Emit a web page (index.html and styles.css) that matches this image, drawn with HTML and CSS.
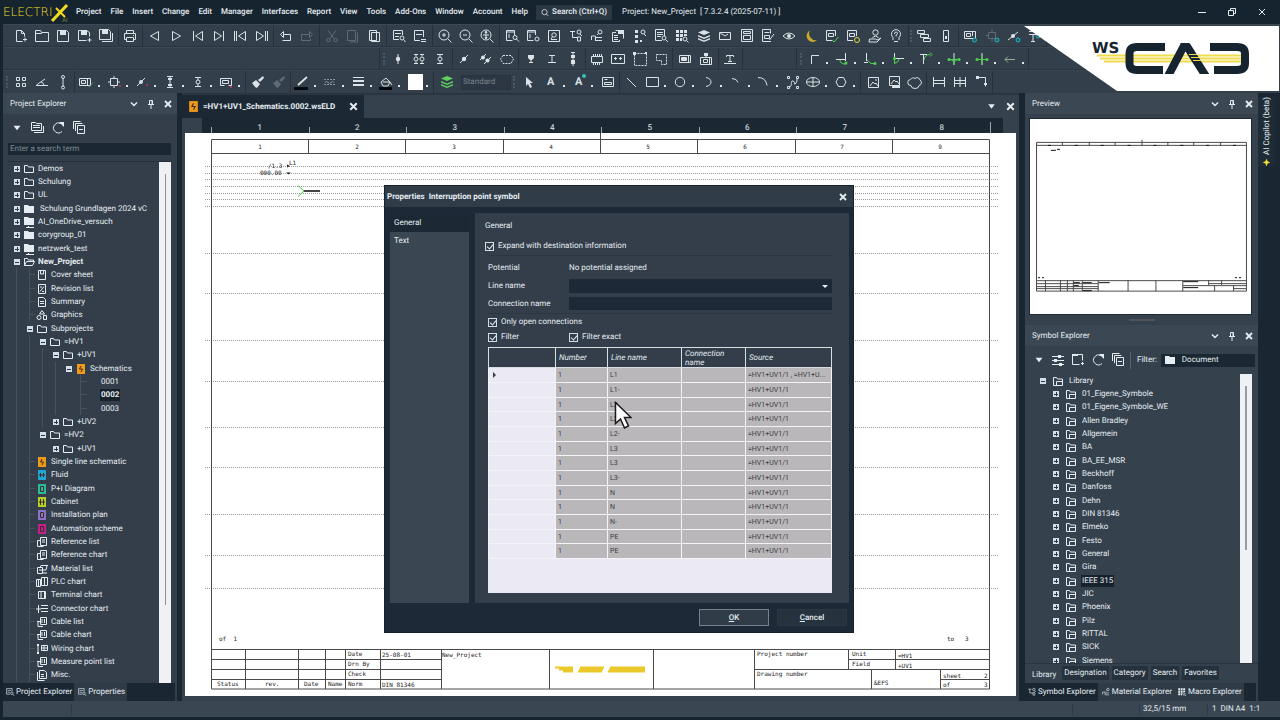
FILE: index.html
```html
<!DOCTYPE html>
<html lang="en">
<head>
<meta charset="utf-8">
<title>ELECTRIX - New_Project</title>
<link rel="stylesheet" href="styles.css">
</head>
<body>
<svg class="sprite" aria-hidden="true">
<symbol id="new" viewBox="0 0 16 16"><path d="M9.500 13.500H3.500v-11h5l3 3v3M8.500 2.500v3h3M12 9.500v4M10 11.500h4"/></symbol>
<symbol id="open" viewBox="0 0 16 16"><path d="M1.500 13.500v-11h5l1 2h7v9zM1.500 5.500h6l1-1"/></symbol>
<symbol id="save" viewBox="0 0 16 16"><path d="M2.500 2.500h9l2 2v9h-11z"/><path class="f" d="M5 2h6v5H5z"/></symbol>
<symbol id="saveas" viewBox="0 0 16 16"><path d="M9.500 12.500h-8v-10h8l3 2v4M12.500 10v4M10.500 12h4"/><path class="f" d="M4 2h6v5H4z"/></symbol>
<symbol id="saveall" viewBox="0 0 16 16"><path d="M1.500 1.500h9l2 2v8h-11zM14.500 5v8.500H4"/><path class="f" d="M4 1h6v5H4z"/></symbol>
<symbol id="print" viewBox="0 0 16 16"><path d="M4.500 5.500v-3h7v3M4.500 11.500h-2v-6h11v6h-2M4.500 9.500h7v4h-7zM11 7.500h1"/></symbol>
<symbol id="prev" viewBox="0 0 16 16"><path d="M11.500 3.500v9l-8-4.500z"/></symbol>
<symbol id="next" viewBox="0 0 16 16"><path d="M4.500 3.500v9l8-4.500z"/></symbol>
<symbol id="first" viewBox="0 0 16 16"><path d="M12.500 3.500v9l-7-4.500zM3.500 3v10"/></symbol>
<symbol id="last" viewBox="0 0 16 16"><path d="M3.500 3.500v9l7-4.500zM12.500 3v10"/></symbol>
<symbol id="ffirst" viewBox="0 0 16 16"><path d="M13.500 3.500v9l-7-4.500zM2.500 3v10M4.500 3v10"/></symbol>
<symbol id="llast" viewBox="0 0 16 16"><path d="M2.500 3.500v9l7-4.500zM11.500 3v10M13.500 3v10"/></symbol>
<symbol id="undo" viewBox="0 0 16 16"><path d="M5.500 3.500L2.500 6.500l3 3v-6M5.500 6.500h7v6h-8"/></symbol>
<symbol id="redo" viewBox="0 0 16 16"><path d="M10.500 3.500l3 3-3 3v-6M10.500 6.500h-8v6h9v-2"/></symbol>
<symbol id="cut" viewBox="0 0 16 16"><path d="M4 2.500l6 8M12 2.500l-6 8"/><circle cx="4.500" cy="12" r="1.700"/><circle cx="11.500" cy="12" r="1.700"/></symbol>
<symbol id="copy" viewBox="0 0 16 16"><path d="M2.500 2.500h8v10h-8zM12.500 4.500v9.500H5"/></symbol>
<symbol id="paste" viewBox="0 0 16 16"><path d="M3.500 2.500h7v10h-7zM5.500 4.500h8v9h-8z"/></symbol>
<symbol id="find" viewBox="0 0 16 16"><path d="M8 11.500H2.500v-9h9V7M4 5.500h6M4 8.500h4"/><circle cx="11" cy="10" r="2"/><path d="M12.500 11.500L14.500 14"/></symbol>
<symbol id="replace" viewBox="0 0 16 16"><path d="M8 12.500H2.500v-10h9V9M4 6.500h6M9 11.500h5M9 13.500h5"/></symbol>
<symbol id="zin" viewBox="0 0 16 16"><circle cx="7" cy="7" r="5"/><path d="M11 11l3.500 3.500M7 5v4M5 7h4"/></symbol>
<symbol id="zout" viewBox="0 0 16 16"><circle cx="7" cy="7" r="5"/><path d="M11 11l3.500 3.500M5 7h4"/></symbol>
<symbol id="zfit" viewBox="0 0 16 16"><circle cx="7" cy="7" r="5"/><path d="M11 11l3.500 3.500M7 4v6M4 7h6M7 3l1 1.500H6zM7 11l1-1.500H6z"/></symbol>
<symbol id="docfind" viewBox="0 0 16 16"><path d="M8.500 12.500h-6v-10h8V7M2.500 4h8M5 6v4"/><circle cx="11" cy="9.500" r="2"/><path d="M12.500 11L15 13.500"/></symbol>
<symbol id="docgear" viewBox="0 0 16 16"><path d="M8.500 12.500h-6v-10h8V7M2.500 4h8M5 6v4"/><circle cx="12" cy="11" r="2"/></symbol>
<symbol id="boxfind" viewBox="0 0 16 16"><path d="M2.500 2.500h11v11h-11z"/><circle cx="8" cy="7" r="2.200"/><path d="M6.500 8.500L5 11M5 11.500h6"/></symbol>
<symbol id="treea" viewBox="0 0 16 16"><path d="M2 3.500h5M4.500 3.500v6h5M9.500 9v4h3v-4z"/><circle cx="11" cy="4" r="2"/><path d="M12 6l2 2"/></symbol>
<symbol id="treeb" viewBox="0 0 16 16"><path d="M2.500 12v-4h4M6.500 8v5M7 9.500h6M7 12.500h6"/><circle cx="11" cy="4" r="2"/><path d="M9.500 5.500L8 7"/></symbol>
<symbol id="copies" viewBox="0 0 16 16"><path d="M6 4.500H2.500v9h7V12M5.500 2.500h8v8M4 7.500h4M4 9.500h4M4 11.500h4"/><path class="f" d="M8 2h6v4H8z"/></symbol>
<symbol id="dots" viewBox="0 0 16 16"><path class="f" d="M3 2h3v3H3zM3 7h3v3H3zM3 12h3v3H3zM8 12h2v2H8z"/><circle cx="11" cy="4" r="2"/><path d="M12 6l2 2"/></symbol>
<symbol id="doclist" viewBox="0 0 16 16"><path d="M9 12.500H2.500v-11h9V8M4 4.500h6M4 6.500h6M4 8.500h4"/><circle cx="11" cy="10" r="2"/><path d="M12.500 11.500L15 14"/></symbol>
<symbol id="gridf" viewBox="0 0 16 16"><path class="f" d="M2 2h3v3H2zM6 2h3v3H6zM10 2h3v3h-3zM2 6h3v3H2zM6 6h3v3H6zM10 6h3v2h-3zM2 10h3v3H2zM6 10h2v3H6z"/><circle cx="11" cy="11" r="2"/><path d="M12.500 12.500l2 2"/></symbol>
<symbol id="layers" viewBox="0 0 16 16"><path class="f" d="M8 2l6 2.500-6 2.500-6-2.500zM2 7l6 2.500L14 7v1.500L8 11 2 8.500zM2 10l6 2.500 6-2.500v1.500L8 14l-6-2.500z"/></symbol>
<symbol id="mail" viewBox="0 0 16 16"><path d="M2.500 4.500h11v7h-11zM5 6l3 2 3-2M4 4.500v2"/></symbol>
<symbol id="frame" viewBox="0 0 16 16"><path d="M2.500 1.500h11v12h-11zM4.500 3.500h7v2h-7zM4.500 7.500h7v4h-7z"/></symbol>
<symbol id="docedit" viewBox="0 0 16 16"><path d="M11 13.500H2.500v-12h8v4M4.500 4.500h5M4.500 7.500h5v3h-5zM9.500 12l4.500-6"/></symbol>
<symbol id="eye" viewBox="0 0 16 16"><path d="M2 8q6-6 12 0-6 6-12 0"/><circle class="f" cx="8" cy="8" r="2"/></symbol>
<symbol id="moon" viewBox="0 0 16 16"><path class="f" d="M7 2.500a6 6 0 1 0 7 9.500A6.500 6.500 0 0 1 7 2.500"/></symbol>
<symbol id="docok" viewBox="0 0 16 16"><path d="M8 12.500H2.500v-10h9V8M4.500 5.500h5v3h-5z"/><path class="gr" d="M8 12l2 2 4.500-5"/></symbol>
<symbol id="docye" viewBox="0 0 16 16"><path d="M8 12.500H2.500v-10h9V8M4.500 5.500h5v3h-5z"/><circle class="ye" cx="12" cy="12" r="2.500"/></symbol>
<symbol id="user" viewBox="0 0 16 16"><circle cx="8.500" cy="4.500" r="2.700"/><path d="M5.500 9.500q3-3 6 0M2.500 11h6l1.500 1 4-2-4 4h-8z"/></symbol>
<symbol id="help" viewBox="0 0 16 16"><path d="M5 12V9.500A4.500 4.500 0 1 1 11 9.500V12M6.500 6q0-2 1.500-2t1.500 1.500Q9 7 8 7v1.500M6 13.500h4"/></symbol>
<symbol id="wins" viewBox="0 0 16 16"><path d="M1.500 2.500h7v3h-7zM4.500 6.500h8v3h-8zM7.500 10.500h7v3h-7z"/></symbol>
<symbol id="toggle" viewBox="0 0 16 16"><path d="M5.500 2.500h5v11h-5z"/><path class="f" d="M7 8h2v3H7z"/></symbol>
<symbol id="devt" viewBox="0 0 16 16"><path d="M2.500 3.500h11v7h-11zM4.500 5.500h4v3h-4zM10.500 4v4"/><circle class="te" cx="12.500" cy="12" r="2"/></symbol>
<symbol id="dash" viewBox="0 0 16 16"><path d="M4.500 4.500h7v6h-7zM8 1.500v3M8 11v3M2 7.500h2"/><circle class="te" cx="13" cy="12" r="2"/></symbol>
<symbol id="nodet" viewBox="0 0 16 16"><path d="M3 12L13 4"/><circle class="f" cx="8" cy="8" r="2"/><circle class="te" cx="13" cy="12" r="2"/></symbol>
<symbol id="tt" viewBox="0 0 16 16"><path d="M3 3.500h8v3H3M7 6v7M5 13.500h4"/><circle class="te" cx="12" cy="8" r="2"/></symbol>
<symbol id="pin1" viewBox="0 0 16 16"><path d="M8 3v10"/><circle class="f" cx="8" cy="8" r="2.200"/></symbol>
<symbol id="pin2" viewBox="0 0 16 16"><path d="M5 3.500v2M5 10.500v2M11 3.500v2M11 10.500v2M3 3.500h4M9 3.500h4M3 12.500h4M9 12.500h4"/><circle cx="5" cy="8" r="2"/><circle cx="11" cy="8" r="2"/></symbol>
<symbol id="pin3" viewBox="0 0 16 16"><path d="M5 3.500h6M5 12.500h6M8 3v3M8 10v3"/><circle cx="8" cy="8" r="2"/></symbol>
<symbol id="node" viewBox="0 0 16 16"><path d="M4 12l8-8"/><circle class="f" cx="8" cy="8" r="2.200"/></symbol>
<symbol id="node2" viewBox="0 0 16 16"><path d="M3 9l6-6M7 13l7-7"/><circle class="f" cx="6" cy="6.500" r="2"/><circle class="f" cx="10.500" cy="9.500" r="2"/></symbol>
<symbol id="hexd" viewBox="0 0 16 16"><path stroke-dasharray="2 1" d="M4 4.500h8L14.500 8 12 12.500H4L1.500 8z"/></symbol>
<symbol id="tf" viewBox="0 0 16 16"><path d="M8 7v4M6 11.500h4"/><path class="f" d="M5 4h6v3L9 9H7L5 7z"/></symbol>
<symbol id="tinv" viewBox="0 0 16 16"><path d="M5 4.500h6M8 5v6M4 11.500h8"/></symbol>
<symbol id="pinsq" viewBox="0 0 16 16"><path d="M8 1v14M6 1.500h4"/><path class="f" d="M6 4h4v3H6zM6 9h4v4H6z"/></symbol>
<symbol id="chip" viewBox="0 0 16 16"><path d="M2.500 5.500h11v6h-11zM4.500 3v2M6.500 3v2M8.500 3v2M10.500 3v2M12.500 3v2M4.500 12v2M6.500 12v2M8.500 12v2M10.500 12v2"/></symbol>
<symbol id="pp" viewBox="0 0 16 16"><path d="M1.500 3.500h13v9h-13zM4 7.500h3M5.500 6v3M9 7.500h3M10.500 6v3"/></symbol>
<symbol id="sel" viewBox="0 0 16 16"><path stroke-dasharray="2 1" d="M2.500 2.500h12v12h-12z"/><path class="f" d="M1 1h3v3H1zM13 1h2v2h-2z"/></symbol>
<symbol id="selm" viewBox="0 0 16 16"><path stroke-dasharray="2 1" d="M3.500 3.500h10v10h-5v-4h-5z"/></symbol>
<symbol id="dev" viewBox="0 0 16 16"><path d="M2.500 4.500h11v7h-11zM4.500 6.500h5v3h-5zM11.500 5v6"/><path class="f" d="M5 7h4v2H5z"/></symbol>
<symbol id="devp" viewBox="0 0 16 16"><path d="M2.500 6.500h11v7h-11zM5.500 8.500h4v3h-4zM8 3v3M11.500 7v6"/><path class="f" d="M6 2h4v3H6z"/></symbol>
<symbol id="txt" viewBox="0 0 16 16"><path d="M4.500 6v-1.500h7V6M8 5v6M6 10.500h4M2 12.500h12"/></symbol>
<symbol id="w1" viewBox="0 0 16 16"><path d="M5.500 13V4.500H13"/></symbol>
<symbol id="w2" viewBox="0 0 16 16"><path d="M2 8.500h9M11.500 2v8"/><path class="gr" d="M6 9q0 4 5 4h1"/><circle class="gf" cx="12" cy="12" r="1.500"/></symbol>
<symbol id="w3" viewBox="0 0 16 16"><path d="M4.500 2v8M2 11.500h4"/><path class="gr" d="M5 9l4 3.500h3"/><circle class="gf" cx="13" cy="12.500" r="1.500"/></symbol>
<symbol id="w4" viewBox="0 0 16 16"><path d="M4.500 2v4M5 7.500h9"/><path class="gr" d="M4.500 6v7M5 12q3 0 4-4"/><circle class="gf" cx="4.500" cy="7.500" r="1.500"/></symbol>
<symbol id="w5" viewBox="0 0 16 16"><path d="M2 3.500h7M5.500 4v9"/><path class="gr" d="M6 9q1-5.500 6-5.500M12 1.500l2 2-2 2"/></symbol>
<symbol id="w6" viewBox="0 0 16 16"><path d="M8 2v12"/><path class="gr" d="M2 8.500h12M4 8.500q4 0 4 4 0-4 4-4"/><circle class="gf" cx="3" cy="8.500" r="1.500"/><circle class="gf" cx="13" cy="8.500" r="1.500"/></symbol>
<symbol id="w7" viewBox="0 0 16 16"><path d="M8 2v12"/><path class="gr" d="M2 8.500h12M8 4v9"/><circle class="gf" cx="3" cy="8.500" r="1.500"/><circle class="gf" cx="13" cy="8.500" r="1.500"/></symbol>
<symbol id="w8" viewBox="0 0 16 16"><path d="M3 8.500h10M6 5.500l-3 3 3 3"/></symbol>
<symbol id="four" viewBox="0 0 16 16"><path d="M3.500 3.500h3v3h-3zM9.500 3.500h3v3h-3zM3.500 9.500h3v3h-3zM9.500 9.500h3v3h-3z"/></symbol>
<symbol id="angle" viewBox="0 0 16 16"><path d="M2 11.500h12M2.500 11L11 5M7 8q3 1 3 3.500"/></symbol>
<symbol id="dim" viewBox="0 0 16 16"><path d="M8 4v9"/><circle cx="8" cy="3" r="1.500"/><circle cx="8" cy="13.500" r="1.500"/></symbol>
<symbol id="devr" viewBox="0 0 16 16"><path d="M1.500 4.500h11v7h-11zM3.500 6.500h4v3h-4zM9.500 5v6"/><path class="gd" d="M10 12l2 1 3-5"/></symbol>
<symbol id="comp" viewBox="0 0 16 16"><path d="M4.500 4.500h7v7h-7zM8 2v2M8 12v2M2 8h2M12 8h2"/><path class="rf" d="M13 11h2v2h-2z"/></symbol>
<symbol id="noder" viewBox="0 0 16 16"><path d="M3 12l8-8"/><circle class="f" cx="7" cy="8" r="2"/><path class="rf" d="M12 10h2v2h-2z"/></symbol>
<symbol id="pinr" viewBox="0 0 16 16"><path d="M5 2.500h6M8 3v10M5 13.500h6"/><path class="f" d="M6 4h4v2H6zM6 10h4v2H6z"/></symbol>
<symbol id="modr" viewBox="0 0 16 16"><path d="M2.500 4.500h11v7h-3M2.500 4.500v7h4M4.500 6.500h6v3h-6z"/><path class="rf" d="M12 12h2v2h-2z"/></symbol>
<symbol id="brush" viewBox="0 0 16 16"><path class="f" d="M2 9l4-3 4 4-3 4-2-1zM8 6l5-4 1 2-4 4z"/></symbol>
<symbol id="pen" viewBox="0 0 16 16"><path stroke-width="1.800" d="M4 11l9-8"/><path class="k" d="M0 13h14v3H0z"/></symbol>
<symbol id="hatch" viewBox="0 0 16 16"><path stroke-dasharray="2 1" d="M2 5.500h12M2 10.500h12"/><path d="M3 8.500q1.500-2 3 0t3 0 3 0"/></symbol>
<symbol id="lines" viewBox="0 0 16 16"><path d="M3 3.500h11"/><path stroke-width="2" d="M3 7h11M3 11h11"/></symbol>
<symbol id="bucket" viewBox="0 0 16 16"><path d="M3 8l5-4 4 4-2 4H5zM5 8h7l2 3"/><path class="k" d="M1 13h13v3H1z"/></symbol>
<symbol id="arrow" viewBox="0 0 16 16"><path class="f" d="M5 3l7 6H9l2 4-2 1-2-4-2 2z"/></symbol>
<symbol id="imgbox" viewBox="0 0 16 16"><path d="M2.500 3.500h11v9h-11zM4.500 5.500h3M4.500 8.500h7v2h-7z"/></symbol>
<symbol id="line" viewBox="0 0 16 16"><path d="M3 4l9 9"/></symbol>
<symbol id="rect" viewBox="0 0 16 16"><path d="M2.500 3.500h12v9h-12z"/></symbol>
<symbol id="circ" viewBox="0 0 16 16"><circle cx="8" cy="8" r="4.700"/></symbol>
<symbol id="arc" viewBox="0 0 16 16"><path d="M6 3.500q5 1 5 4.500t-5 4.500"/></symbol>
<symbol id="arc2" viewBox="0 0 16 16"><path d="M4 4.500q5 0 6 4"/></symbol>
<symbol id="arc3" viewBox="0 0 16 16"><path d="M2 3.500q8 0 9 8"/></symbol>
<symbol id="spline" viewBox="0 0 16 16"><path d="M2.500 2.500h2v2h-2zM11.500 2.500h2v2h-2zM2.500 12.500h2v2h-2zM11.500 12.500h2v2h-2zM4 13C8 13 5 6 8 7s0 7 4 0V5"/></symbol>
<symbol id="ell" viewBox="0 0 16 16"><ellipse cx="8" cy="8" rx="6.500" ry="4.500"/><path d="M1.500 8h13M8 3.500v9"/></symbol>
<symbol id="hex" viewBox="0 0 16 16"><path d="M5.500 3.500h5L13 8l-2.500 4.500h-5L3 8z"/></symbol>
<symbol id="img" viewBox="0 0 16 16"><path d="M3.500 3.500h10v10h-10zM5 12l3-4 2 2 1-1 2 3M10 6h2"/></symbol>
<symbol id="img2" viewBox="0 0 16 16"><path d="M3.500 2.500h10v9h-10zM5 10l3-4 2 2 1-1 2 3"/><path class="f" d="M6 11h8v3H6z"/></symbol>
<symbol id="cloud" viewBox="0 0 16 16"><path d="M4 11.500a3 3 0 0 1-.5-6A3 3 0 0 1 8 4.500a3 3 0 0 1 5 1.500 3 3 0 0 1-1 5.500A4 3 0 0 1 4 11.500z"/></symbol>
<symbol id="hdim" viewBox="0 0 16 16"><path d="M2.500 3v10M13.500 3v10M3 6.500h10M3 9.500h10"/></symbol>
<symbol id="hdim2" viewBox="0 0 16 16"><path d="M2.500 3v10M8 3v10M13.500 3v10M3 6.500h10M3 9.500h10"/></symbol>
<symbol id="ldim" viewBox="0 0 16 16"><path d="M3 3.500h9.500v9"/><path class="f" d="M3 2h3v3H3zM11 9h3v2h-3z"/></symbol>
<symbol id="fold" viewBox="0 0 12 12"><path d="M1.500 9.500v-7h3l1 1.500h5v5.500z"/></symbol>
<symbol id="foldf" viewBox="0 0 12 12"><path class="f" d="M1 10V2h4l1 1h5v7z"/></symbol>
<symbol id="foldn" viewBox="0 0 12 12"><path class="f" d="M1 9V1h4l1 1h5v7zM3 11h2v-1h1v1h5v1H3z"/></symbol>
<symbol id="foldo" viewBox="0 0 12 12"><path d="M1.500 9.500v-7h3l1 1.500h5v2M1.500 9.500l2-4h8l-2 4z"/></symbol>
<symbol id="foldl" viewBox="0 0 12 12"><path d="M1.500 10.500v-8h3l1 1.500h5v6.500zM4.500 10V6.500h6"/></symbol>
<symbol id="cover" viewBox="0 0 12 12"><path d="M2.500 1.500h7v9h-7zM4.500 2v3h3V2"/></symbol>
<symbol id="doc" viewBox="0 0 12 12"><path d="M2.500 1.500h5l2 2v7h-7zM4 5.500h4M4 7.500h4"/></symbol>
<symbol id="rev" viewBox="0 0 12 12"><path d="M2.500 1.500h7v9h-7zM4 8.500l4-5M4 4h2M6 8.500h2"/></symbol>
<symbol id="graph" viewBox="0 0 12 12"><path d="M6 1.500L8.500 5h-5z"/><circle cx="3" cy="8.500" r="2"/><path d="M7.500 6.500h3v4h-3z"/></symbol>
<symbol id="ref" viewBox="0 0 12 12"><path d="M4.500 1.500h6v8h-6zM4 4.500H1.500v6h6M6 4h3M6 6h3"/></symbol>
<symbol id="cart" viewBox="0 0 12 12"><path d="M1.500 4.500h5v6h-5zM4 4.500l1-2h7M6 7h4l1-4M7 10h4M3 7h3"/></symbol>
<symbol id="plc" viewBox="0 0 12 12"><path d="M.5 3.500h4v7h-4zM5.500 1.500h6v8h-6zM2.500 4v6M8.500 2v7"/></symbol>
<symbol id="term" viewBox="0 0 12 12"><path d="M2.500 2.500h7v7h-7zM5 2v8"/><path class="f" d="M8 3h2v6H8z"/></symbol>
<symbol id="conn" viewBox="0 0 12 12"><path d="M0 6h5M2.500 2v8M5 2.500h7M5 5.500h7M5 8.500h7"/></symbol>
<symbol id="cable" viewBox="0 0 12 12"><path d="M4.500 1.500h6v7h-6zM6 3v4M8.500 3v4M1 5.500h3M2 6v4.500h5"/></symbol>
<symbol id="wire" viewBox="0 0 12 12"><path d="M2 2v8M5.500 2.500h6v5h-6zM8 3v4M6 5h5"/><path class="f" d="M1 1h2v2H1zM1 9h2v2H1z"/></symbol>
<symbol id="misc" viewBox="0 0 12 12"><path d="M3.500 1.500h5l2 2v6h-7zM1.500 3v8.500h7M5 5.500h3M5 7.500h3"/></symbol>
<symbol id="sld" viewBox="0 0 12 12"><path class="f" d="M2 1h8v10H2z"/><path class="d" d="M6 3L4.500 6h3L6 9"/></symbol>
<symbol id="fluid" viewBox="0 0 12 12"><path class="f" d="M2 1h8v10H2z"/><path class="d" d="M3 6h6M4.500 4v4M7.500 4v4"/></symbol>
<symbol id="boxed" viewBox="0 0 12 12"><path class="f" d="M2 1h8v10H2z"/><path class="d" d="M4.500 3.500h3v5h-3z"/></symbol>
<symbol id="cab" viewBox="0 0 12 12"><path class="f" d="M2 1h8v10H2z"/><path class="d" d="M4.500 3v6M7.500 3v6M3 6h6"/></symbol>
<symbol id="chev" viewBox="0 0 12 12"><path stroke-width="1.500" d="M3 4.500l3 3 3-3"/></symbol>
<symbol id="pin" viewBox="0 0 12 12"><path d="M4.500 6.500v-4h3v4M3 6.500h6M6 7v4M7 3v3"/></symbol>
<symbol id="x" viewBox="0 0 12 12"><path stroke-width="1.800" d="M3 3l6 6M9 3l-6 6"/></symbol>
<symbol id="tri" viewBox="0 0 12 12"><path class="f" d="M3 4h6L6 8z"/></symbol>
<symbol id="refresh" viewBox="0 0 16 16"><path d="M12 11.500a5 5 0 1 1-1-8"/><path class="f" d="M9 2h5v5z"/></symbol>
<symbol id="collapse" viewBox="0 0 16 16"><path d="M6.500 5.500h7v8h-7zM4.500 11V3.500h7M2.500 9V1.500h7M8 9.500h4"/></symbol>
<symbol id="foldstack" viewBox="0 0 16 16"><path d="M2.500 2.500h4l1 1h5v7h-10zM14.500 6v6.500H5M4 5.500h7M4 7.500h7"/></symbol>
<symbol id="foldadd" viewBox="0 0 16 16"><path d="M2.500 12.500v-10h10v6M2.500 12.500h7M11 11.500h3M12.500 10v3"/><path class="f" d="M2 2h6v2H2z"/></symbol>
<symbol id="sliders" viewBox="0 0 16 16"><path d="M2 4.500h12M2 8.500h12M2 12.500h12"/><path class="f" d="M8 3h3v3H8zM4 7h3v3H4zM9 11h3v3H9z"/></symbol>
</svg>

<header class="title">
<svg class="brand" viewBox="0 0 66 22" role="img" aria-label="Electrix AI"><text x="0" y="15" class="brandt">ELECTRI</text><path stroke-width="3" d="M64 4L49 20"/><path stroke-width="2" d="M53 7L62 16"/><text x="59" y="21" class="brands">AI</text></svg>
<nav class="menu"><a href="#">Project</a><a href="#">File</a><a href="#">Insert</a><a href="#">Change</a><a href="#">Edit</a><a href="#">Manager</a><a href="#">Interfaces</a><a href="#">Report</a><a href="#">View</a><a href="#">Tools</a><a href="#">Add-Ons</a><a href="#">Window</a><a href="#">Account</a><a href="#">Help</a></nav>
<button class="search"><svg viewBox="0 0 12 12"><circle cx="6" cy="5.500" r="3.500"/><path d="M8.500 8L11 10.500"/></svg>Search (Ctrl+Q)</button>
<span class="ptitle">Project: New_Project &nbsp;[ 7.3.2.4 (2025-07-11) ]</span>
<div class="winbtns"><button aria-label="Minimize"><svg viewBox="0 0 12 12"><path d="M2 6.500h8"/></svg></button><button aria-label="Restore"><svg viewBox="0 0 12 12"><path d="M2.500 4.500h5v5h-5zM4.500 4V2.500h5v5H8"/></svg></button><button aria-label="Close"><svg viewBox="0 0 12 12"><path d="M3 3l6 6M9 3l-6 6"/></svg></button></div>
</header>

<section class="bars">
<div class="bar bar1">
<div class="grp n5"><button aria-label="New"><svg><use href="#new"/></svg></button><button aria-label="Open"><svg><use href="#open"/></svg></button><button aria-label="Save"><svg><use href="#save"/></svg></button><button aria-label="Save as"><svg><use href="#saveas"/></svg></button><button aria-label="Save all"><svg><use href="#saveall"/></svg></button></div>
<div class="grp n1"><button aria-label="Print"><svg><use href="#print"/></svg></button></div>
<div class="grp n6"><button aria-label="Previous"><svg><use href="#prev"/></svg></button><button aria-label="Next"><svg><use href="#next"/></svg></button><button aria-label="First"><svg><use href="#first"/></svg></button><button aria-label="Last"><svg><use href="#last"/></svg></button><button aria-label="First page"><svg><use href="#ffirst"/></svg></button><button aria-label="Last page"><svg><use href="#llast"/></svg></button></div>
<div class="grp n2"><button aria-label="Undo"><svg><use href="#undo"/></svg></button><button class="off" aria-label="Redo"><svg><use href="#redo"/></svg></button></div>
<div class="grp n3"><button class="off" aria-label="Cut"><svg><use href="#cut"/></svg></button><button class="off" aria-label="Copy"><svg><use href="#copy"/></svg></button><button aria-label="Paste"><svg><use href="#paste"/></svg></button></div>
<div class="grp n2"><button aria-label="Find"><svg><use href="#find"/></svg></button><button aria-label="Replace"><svg><use href="#replace"/></svg></button></div>
<div class="grp n3"><button aria-label="Zoom in"><svg><use href="#zin"/></svg></button><button aria-label="Zoom out"><svg><use href="#zout"/></svg></button><button aria-label="Zoom fit"><svg><use href="#zfit"/></svg></button></div>
<div class="grp n19"><button aria-label="Page search"><svg><use href="#docfind"/></svg></button><button aria-label="Page settings"><svg><use href="#docgear"/></svg></button><button aria-label="Search box"><svg><use href="#boxfind"/></svg></button><button aria-label="Tree"><svg><use href="#treea"/></svg></button><button aria-label="Structure"><svg><use href="#treeb"/></svg></button><button aria-label="Copies"><svg><use href="#copies"/></svg></button><button aria-label="List"><svg><use href="#dots"/></svg></button><button aria-label="Find in list"><svg><use href="#doclist"/></svg></button><button aria-label="Grid"><svg><use href="#gridf"/></svg></button><button aria-label="Layers"><svg><use href="#layers"/></svg></button><button aria-label="Mail"><svg><use href="#mail"/></svg></button><button aria-label="Form"><svg><use href="#frame"/></svg></button><button aria-label="Edit form"><svg><use href="#docedit"/></svg></button><button aria-label="View"><svg><use href="#eye"/></svg></button><button class="moon" aria-label="Dark mode"><svg><use href="#moon"/></svg></button><button aria-label="Check"><svg><use href="#docok"/></svg></button><button aria-label="Options"><svg><use href="#docye"/></svg></button><button aria-label="Support"><svg><use href="#user"/></svg></button><button aria-label="Help"><svg><use href="#help"/></svg></button></div>
<div class="grip"></div>
<div class="grp n2"><button aria-label="Windows"><svg><use href="#wins"/></svg></button><button aria-label="Toggle"><svg><use href="#toggle"/></svg></button></div>
<div class="grp n4"><button aria-label="Add device"><svg><use href="#devt"/></svg></button><button class="off" aria-label="Add box"><svg><use href="#dash"/></svg></button><button aria-label="Add node"><svg><use href="#nodet"/></svg></button><button aria-label="Add terminal"><svg><use href="#tt"/></svg></button></div>
</div>

<div class="bar bar2">
<div class="sub suba"><div class="grip"></div>
<div class="grp n3"><button aria-label="Pin"><svg><use href="#pin1"/></svg></button><button aria-label="Double pin"><svg><use href="#pin2"/></svg></button><button aria-label="Pin pair"><svg><use href="#pin3"/></svg></button></div>
<div class="grp n3"><button aria-label="Node"><svg><use href="#node"/></svg></button><button aria-label="Nodes"><svg><use href="#node2"/></svg></button><button aria-label="Shield"><svg><use href="#hexd"/></svg></button></div>
<div class="grp n3"><button aria-label="Terminal"><svg><use href="#tf"/></svg></button><button aria-label="Terminal base"><svg><use href="#tinv"/></svg></button><button aria-label="Connector"><svg><use href="#pinsq"/></svg></button></div>
<div class="grp n4"><button aria-label="PLC"><svg><use href="#chip"/></svg></button><button aria-label="Module"><svg><use href="#pp"/></svg></button><button aria-label="Area"><svg><use href="#sel"/></svg></button><button aria-label="Polygon area"><svg><use href="#selm"/></svg></button></div>
<div class="grp n2"><button aria-label="Device"><svg><use href="#dev"/></svg></button><button aria-label="Device pin"><svg><use href="#devp"/></svg></button></div>
<div class="grp n1"><button aria-label="Text"><svg><use href="#txt"/></svg></button></div></div>
<div class="sub subb"><div class="grip"></div><button class="dd" aria-label="Wire"><svg><use href="#w1"/></svg></button><button class="dd" aria-label="Wire T"><svg><use href="#w2"/></svg></button><button class="dd" aria-label="Wire left"><svg><use href="#w3"/></svg></button><button class="dd" aria-label="Wire right"><svg><use href="#w4"/></svg></button><button class="dd" aria-label="Wire up"><svg><use href="#w5"/></svg></button><button class="dd" aria-label="Wire cross"><svg><use href="#w6"/></svg></button><button class="dd" aria-label="Wire joint"><svg><use href="#w7"/></svg></button><button class="dd dimgreen" aria-label="Wire arrow"><svg><use href="#w8"/></svg></button></div>
</div>

<div class="bar bar3">
<div class="grip"></div>
<div class="grp"><button aria-label="Grid"><svg><use href="#four"/></svg></button><button aria-label="Angle"><svg><use href="#angle"/></svg></button><button aria-label="Distance"><svg><use href="#dim"/></svg></button></div>
<div class="grp"><button class="dd" aria-label="Device style"><svg><use href="#devr"/></svg></button><button class="dd" aria-label="Component style"><svg><use href="#comp"/></svg></button><button class="dd" aria-label="Node style"><svg><use href="#noder"/></svg></button><button class="dd" aria-label="Pin style"><svg><use href="#pinr"/></svg></button><button class="dd" aria-label="Terminal style"><svg><use href="#pin3"/></svg></button><button class="dd" aria-label="Module style"><svg><use href="#modr"/></svg></button></div>
<div class="grp"><button aria-label="Format brush"><svg><use href="#brush"/></svg></button><button class="off" aria-label="Apply format"><svg><use href="#brush"/></svg></button></div>
<div class="grp"><button class="dd" aria-label="Pen colour"><svg><use href="#pen"/></svg></button><button class="dd off2" aria-label="Line type"><svg><use href="#hatch"/></svg></button><button class="dd" aria-label="Line width"><svg><use href="#lines"/></svg></button><button class="dd" aria-label="Fill"><svg><use href="#bucket"/></svg></button><button class="dd" aria-label="Fill colour"><span class="swatch"></span></button></div>
<button class="nar green" aria-label="Layer"><svg><use href="#layers"/></svg></button>
<select class="std" aria-label="Layer name" disabled><option>Standard</option></select>
<div class="grip"></div>
<div class="grp"><button class="nar" aria-label="Pointer"><svg><use href="#arrow"/></svg></button><button class="dd big" aria-label="Text">A</button><button class="dd big" aria-label="Smart text">A<span class="teal"></span></button><button aria-label="Text frame"><svg><use href="#imgbox"/></svg></button></div>
<div class="grp"><button aria-label="Line"><svg><use href="#line"/></svg></button><button class="dd" aria-label="Rectangle"><svg><use href="#rect"/></svg></button><button class="dd" aria-label="Circle"><svg><use href="#circ"/></svg></button><button class="dd" aria-label="Arc"><svg><use href="#arc"/></svg></button><button class="dd" aria-label="Arc 2"><svg><use href="#arc2"/></svg></button><button class="dd" aria-label="Arc 3"><svg><use href="#arc3"/></svg></button><button aria-label="Spline"><svg><use href="#spline"/></svg></button><button class="dd" aria-label="Ellipse"><svg><use href="#ell"/></svg></button><button class="dd" aria-label="Polygon"><svg><use href="#hex"/></svg></button></div>
<div class="grp"><button aria-label="Image"><svg><use href="#img"/></svg></button><button aria-label="Image link"><svg><use href="#img2"/></svg></button><button aria-label="Cloud"><svg><use href="#cloud"/></svg></button></div>
<div class="grp"><button aria-label="Dimension"><svg><use href="#hdim"/></svg></button><button aria-label="Chain dimension"><svg><use href="#hdim2"/></svg></button><button aria-label="Leader"><svg><use href="#ldim"/></svg></button></div>
</div>
</section>

<main class="work">
<aside class="left">
<div class="phead"><span>Project Explorer</span><button aria-label="Menu"><svg><use href="#chev"/></svg></button><button aria-label="Pin"><svg><use href="#pin"/></svg></button><button aria-label="Close"><svg><use href="#x"/></svg></button></div>
<div class="ptools"><button aria-label="Options"><svg><use href="#tri"/></svg></button><button aria-label="Folders"><svg><use href="#foldstack"/></svg></button><button aria-label="Refresh"><svg><use href="#refresh"/></svg></button><button aria-label="Collapse"><svg><use href="#collapse"/></svg></button></div>
<input class="term" type="text" placeholder="Enter a search term" aria-label="Search term">
<div class="treebox">
<ul class="tree">
<li><button class="ex"></button><svg><use href="#fold"/></svg><span>Demos</span></li>
<li><button class="ex"></button><svg><use href="#fold"/></svg><span>Schulung</span></li>
<li><button class="ex"></button><svg><use href="#fold"/></svg><span>UL</span></li>
<li><button class="ex"></button><svg><use href="#foldf"/></svg><span>&nbsp;Schulung Grundlagen 2024 vC</span></li>
<li><button class="ex"></button><svg><use href="#foldn"/></svg><span>AI_OneDrive_versuch</span></li>
<li><button class="ex"></button><svg><use href="#foldf"/></svg><span>corygroup_01</span></li>
<li><button class="ex"></button><svg><use href="#foldn"/></svg><span>netzwerk_test</span></li>
<li><button class="ex m"></button><svg><use href="#foldo"/></svg><b>New_Project</b></li>
<li><i></i><i class="s"></i><svg><use href="#cover"/></svg><span>Cover sheet</span></li>
<li><i></i><i class="s"></i><svg><use href="#rev"/></svg><span>Revision list</span></li>
<li><i></i><i class="s"></i><svg><use href="#doc"/></svg><span>Summary</span></li>
<li><i></i><i class="s"></i><svg><use href="#graph"/></svg><span>Graphics</span></li>
<li><i></i><button class="ex m"></button><svg><use href="#fold"/></svg><span>Subprojects</span></li>
<li><i></i><i></i><button class="ex m"></button><svg><use href="#fold"/></svg><span>=HV1</span></li>
<li><i></i><i></i><i></i><button class="ex m"></button><svg><use href="#fold"/></svg><span>+UV1</span></li>
<li><i></i><i></i><i></i><i></i><button class="ex m"></button><svg class="c1"><use href="#sld"/></svg><span>Schematics</span></li>
<li><i></i><i></i><i></i><i></i><i class="n"></i><i class="s w"></i><span>0001</span></li>
<li><i></i><i></i><i></i><i></i><i class="n"></i><i class="s w"></i><b class="cur">0002</b></li>
<li><i></i><i></i><i></i><i></i><i class="n"></i><i class="s w"></i><span>0003</span></li>
<li><i></i><i></i><i></i><button class="ex"></button><svg><use href="#fold"/></svg><span>+UV2</span></li>
<li><i></i><i></i><button class="ex m"></button><svg><use href="#fold"/></svg><span>=HV2</span></li>
<li><i></i><i></i><i class="n"></i><button class="ex"></button><svg><use href="#fold"/></svg><span>+UV1</span></li>
<li><i></i><i class="s"></i><svg class="c1"><use href="#sld"/></svg><span>Single line schematic</span></li>
<li><i></i><i class="s"></i><svg class="c2"><use href="#fluid"/></svg><span>Fluid</span></li>
<li><i></i><i class="s"></i><svg class="c3"><use href="#boxed"/></svg><span>P+I Diagram</span></li>
<li><i></i><i class="s"></i><svg class="c4"><use href="#cab"/></svg><span>Cabinet</span></li>
<li><i></i><i class="s"></i><svg class="c5"><use href="#boxed"/></svg><span>Installation plan</span></li>
<li><i></i><i class="s"></i><svg class="c6"><use href="#boxed"/></svg><span>Automation scheme</span></li>
<li><i></i><i class="s"></i><svg><use href="#ref"/></svg><span>Reference list</span></li>
<li><i></i><i class="s"></i><svg><use href="#ref"/></svg><span>Reference chart</span></li>
<li><i></i><i class="s"></i><svg><use href="#cart"/></svg><span>Material list</span></li>
<li><i></i><i class="s"></i><svg><use href="#plc"/></svg><span>PLC chart</span></li>
<li><i></i><i class="s"></i><svg><use href="#term"/></svg><span>Terminal chart</span></li>
<li><i></i><i class="s"></i><svg><use href="#conn"/></svg><span>Connector chart</span></li>
<li><i></i><i class="s"></i><svg><use href="#cable"/></svg><span>Cable list</span></li>
<li><i></i><i class="s"></i><svg><use href="#cable"/></svg><span>Cable chart</span></li>
<li><i></i><i class="s"></i><svg><use href="#wire"/></svg><span>Wiring chart</span></li>
<li><i></i><i class="s"></i><svg><use href="#cable"/></svg><span>Measure point list</span></li>
<li><i></i><i class="s"></i><svg><use href="#misc"/></svg><span>Misc.</span></li>
</ul>
<div class="sbar sb1"></div>
</div>
<div class="btabs"><button class="on"><svg><use href="#find"/></svg>Project Explorer</button><button class="lit"><svg><use href="#find"/></svg>Properties</button></div>
</aside>
<div class="split"></div>

<section class="doc">
<div class="dtabs"><div class="dtab"><svg class="c1"><use href="#sld"/></svg><b>=HV1+UV1_Schematics.0002.wsELD</b><button aria-label="Close tab"><svg><use href="#x"/></svg></button></div><button class="push" aria-label="Tab list"><svg><use href="#tri"/></svg></button><button aria-label="Close"><svg><use href="#x"/></svg></button></div>
<div class="ruler"><span>1</span><span>2</span><span>3</span><span>4</span><span>5</span><span>6</span><span>7</span><span>8</span></div>
<div class="sheet">
<svg viewBox="185 133 831 563" preserveAspectRatio="xMinYMin meet">
<g class="dots"><path d="M205 166.500h794M205 173.500h794M205 179.500h794M205 186.500h794M205 193.500h794M205 199.500h794M205 206.500h794M205 253.500h794M205 293.500h794M205 340.500h794M205 381.500h794M205 427.500h794M205 467.500h794M205 514.500h794M205 555.500h794M205 588.500h794"/></g>
<path class="ink" d="M211.500 139.500h778v549.500h-778zM211.500 153.500h778M308.500 139v14M405.500 139v14M503.500 139v14M600.500 133v20M697.500 139v14M795.500 139v14M892.500 139v14"/>
<path class="ink" d="M211.500 649.500h778M211.500 659.500h230M211.500 669.500h230M211.500 679.500h230M245.500 649v40M298.500 649v40M325.500 649v40M345.500 649v40M380.500 649v40M441.500 649v40M549.500 649v40M653.500 649v40M754.500 649v40M848.500 649v20M895.500 649v20M848.500 659.500h141M754.500 669.500h235M871.500 669v20M940.500 669v20M940.500 679.500h49"/>
<g class="mono mid"><text x="260" y="149">1</text><text x="357" y="149">2</text><text x="454" y="149">3</text><text x="551" y="149">4</text><text x="648" y="149">5</text><text x="745" y="149">6</text><text x="842" y="149">7</text><text x="940" y="149">9</text></g>
<g class="mono"><text x="268" y="168">/1.3</text><text x="289" y="165">L1</text><text x="260" y="175">000.00</text>
<text x="219" y="641">of&#160; 1</text><text x="947" y="641">to&#160;&#160; 3</text>
<text x="217" y="686">Status</text><text x="265" y="686">rev.</text><text x="304" y="686">Date</text><text x="328" y="686">Name</text><text x="348" y="686">Norm</text><text x="348" y="656">Date</text><text x="348" y="666">Drn By</text><text x="348" y="676">Check</text><text x="382" y="657">25-08-01</text><text x="382" y="687">DIN 81346</text><text x="442" y="657">New_Project</text>
<text x="757" y="656">Project number</text><text x="757" y="676">Drawing number</text><text x="852" y="656">Unit</text><text x="852" y="666">Field</text><text x="898" y="658">=HV1</text><text x="898" y="668">+UV1</text><text x="874" y="685">&amp;EFS</text><text x="943" y="678">sheet</text><text x="984" y="678">2</text><text x="943" y="687">of</text><text x="984" y="687">3</text></g>
<path class="blk" d="M287 164.500l3 1.500-3 1.500zM286 172.500h5l-2.500 2z"/>
<path class="grn" d="M298 185.500l6 5.500-6 5.500"/><path class="thick" d="M304 191h16"/>
<path class="yel" d="M555 667.500h18M559 669.500h14M563 671.500h10M580 667.500h24M579 669.500h24M578 671.500h24M610 667.500h35M609 669.500h36M608 671.500h37"/>
</svg>
</div>
</section>
<div class="split thin"></div>

<aside class="right">
<div class="phead"><span>Preview</span><button aria-label="Menu"><svg><use href="#chev"/></svg></button><button aria-label="Pin"><svg><use href="#pin"/></svg></button><button aria-label="Close"><svg><use href="#x"/></svg></button></div>
<div class="preview">
<svg viewBox="1030 118 222 196" preserveAspectRatio="xMidYMid meet">
<path class="ink" d="M1036.500 141.500h211v149.500h-211zM1036.500 144.500h211M1062.500 141v4M1089.500 141v4M1115.500 141v4M1142.500 139v6M1168.500 141v4M1194.500 141v4M1221.500 141v4M1036.500 280.500h211M1045.500 280v11M1060.500 280v11M1067.500 280v11M1073.500 280v11M1082.500 280v11M1098.500 280v11M1128.500 280v11M1156.500 280v11M1183.500 280v11M1036.500 283.500h62M1036.500 286.500h62M1036.500 288.500h62M1183.500 285.500h64M1209.500 280v5M1222.500 280v5M1209.500 283.500h38M1215.500 285v6M1234.500 285v6M1234.500 288.500h13"/>
<path class="blk2" d="M1048 144.500h3M1075 144.500h3M1101 144.500h3M1128 144.500h3M1154 144.500h3M1181 144.500h3M1207 144.500h3M1234 144.500h3M1051 149.500h5M1057 148.500h3M1038 277.500h2M1042 277.500h2M1236 277.500h2M1240 277.500h2M1083 282.500h9M1099 282.500h11M1083 290.500h9M1184 281.500h15M1184 287.500h15M1074 282.500h6M1074 285.500h5"/>
</svg>
</div>
<div class="handle"></div>
<div class="phead"><span>Symbol Explorer</span><button aria-label="Menu"><svg><use href="#chev"/></svg></button><button aria-label="Pin"><svg><use href="#pin"/></svg></button><button aria-label="Close"><svg><use href="#x"/></svg></button></div>
<div class="ptools rt"><button aria-label="Options"><svg><use href="#tri"/></svg></button><button aria-label="Settings"><svg><use href="#sliders"/></svg></button><button aria-label="New folder"><svg><use href="#foldadd"/></svg></button><button aria-label="Refresh"><svg><use href="#refresh"/></svg></button><button aria-label="Collapse"><svg><use href="#collapse"/></svg></button><span class="vline"></span><label for="flt">Filter:</label><div class="flt"><svg><use href="#foldf"/></svg><select id="flt"><option>Document</option></select></div></div>
<div class="treebox rtb">
<ul class="tree rtree">
<li><button class="ex m"></button><svg><use href="#foldl"/></svg><span>Library</span></li>
<li><i class="n"></i><button class="ex"></button><svg><use href="#foldl"/></svg><span>01_Eigene_Symbole</span></li>
<li><i class="n"></i><button class="ex"></button><svg><use href="#foldl"/></svg><span>01_Eigene_Symbole_WE</span></li>
<li><i class="n"></i><button class="ex"></button><svg><use href="#foldl"/></svg><span>Allen Bradley</span></li>
<li><i class="n"></i><button class="ex"></button><svg><use href="#foldl"/></svg><span>Allgemein</span></li>
<li><i class="n"></i><button class="ex"></button><svg><use href="#foldl"/></svg><span>BA</span></li>
<li><i class="n"></i><button class="ex"></button><svg><use href="#foldl"/></svg><span>BA_EE_MSR</span></li>
<li><i class="n"></i><button class="ex"></button><svg><use href="#foldl"/></svg><span>Beckhoff</span></li>
<li><i class="n"></i><button class="ex"></button><svg><use href="#foldl"/></svg><span>Danfoss</span></li>
<li><i class="n"></i><button class="ex"></button><svg><use href="#foldl"/></svg><span>Dehn</span></li>
<li><i class="n"></i><button class="ex"></button><svg><use href="#foldl"/></svg><span>DIN 81346</span></li>
<li><i class="n"></i><button class="ex"></button><svg><use href="#foldl"/></svg><span>Elmeko</span></li>
<li><i class="n"></i><button class="ex"></button><svg><use href="#foldl"/></svg><span>Festo</span></li>
<li><i class="n"></i><button class="ex"></button><svg><use href="#foldl"/></svg><span>General</span></li>
<li><i class="n"></i><button class="ex"></button><svg><use href="#foldl"/></svg><span>Gira</span></li>
<li><i class="n"></i><button class="ex"></button><svg><use href="#foldl"/></svg><span class="cur">IEEE 315</span></li>
<li><i class="n"></i><button class="ex"></button><svg><use href="#foldl"/></svg><span>JIC</span></li>
<li><i class="n"></i><button class="ex"></button><svg><use href="#foldl"/></svg><span>Phoenix</span></li>
<li><i class="n"></i><button class="ex"></button><svg><use href="#foldl"/></svg><span>Pilz</span></li>
<li><i class="n"></i><button class="ex"></button><svg><use href="#foldl"/></svg><span>RITTAL</span></li>
<li><i class="n"></i><button class="ex"></button><svg><use href="#foldl"/></svg><span>SICK</span></li>
<li><i class="n"></i><button class="ex"></button><svg><use href="#foldl"/></svg><span>Siemens</span></li>
</ul>
<div class="sbar sb2"></div>
</div>
<div class="rtabs"><button class="on">Library</button><button>Designation</button><button>Category</button><button>Search</button><button>Favorites</button></div>
<div class="btabs"><button class="on"><svg><use href="#treea"/></svg>Symbol Explorer</button><button class="lit"><svg><use href="#treeb"/></svg>Material Explorer</button><button class="lit"><svg><use href="#gridf"/></svg>Macro Explorer</button></div>
</aside>
<div class="copilot"><button><svg viewBox="0 0 12 12"><path d="M6 1l1.500 3.500L11 6 7.500 7.500 6 11 4.500 7.500 1 6l3.500-1.500z"/></svg>AI Copilot (beta)</button></div>
</main>

<footer class="status"><span class="cell s0"></span><span class="cell grow"></span><span class="cell s1"></span><span class="cell mm">32,5/15 mm</span><span class="cell sc">1 &nbsp;DIN A4 &nbsp;1:1</span></footer>

<svg class="banner" viewBox="0 0 256 66" role="img" aria-label="WSCAD">
<defs><clipPath id="legs"><rect x="138" y="17" width="52" height="31"/></clipPath></defs>
<path fill="#fff" stroke="none" d="M0 0h255v65H93z"/>
<path class="stripe" d="M73 29.500h148M76 32.500h145M80 35.500h141"/>
<text x="68" y="27" class="ws">WS</text>
<g class="logo"><path d="M141 21H113Q105.500 21 105.500 28v9Q105.500 44 113 44H139"/><path d="M186 21H213Q221 21 221 28v9Q221 44 213 44H190"/><path clip-path="url(#legs)" d="M143 52L163 14M159 14L183 52"/></g>
<path class="bands" d="M165 28.500h8M167 31.500h8M169 34.500h8"/>
</svg>

<form class="dialog">
<div class="dhead"><h2>Properties&nbsp; Interruption point symbol</h2><button type="button" aria-label="Close"><svg><use href="#x"/></svg></button></div>
<div class="dbody">
<nav class="dnav"><a href="#" class="on">General</a><a href="#">Text</a></nav>
<div class="dmain">
<h3>General</h3>
<label class="chk first"><input type="checkbox" checked>Expand with destination information</label>
<div class="fields">
<span>Potential</span><span>No potential assigned</span>
<label for="ln">Line name</label><div class="combo"><select id="ln"><option></option></select></div>
<label for="cn">Connection name</label><input id="cn" type="text">
</div>
<div class="checks"><label class="chk full"><input type="checkbox" checked>Only open connections</label><label class="chk"><input type="checkbox" checked>Filter</label><label class="chk"><input type="checkbox" checked>Filter exact</label></div>
<div class="tablebox"><table>
<colgroup><col class="k0"><col class="k1"><col class="k2"><col class="k3"><col class="k4"></colgroup>
<thead><tr><th></th><th>Number</th><th>Line name</th><th>Connection name</th><th>Source</th></tr></thead>
<tbody>
<tr><td><span class="ptr"></span></td><td>1</td><td>L1</td><td></td><td>=HV1+UV1/1 , =HV1+U...</td></tr>
<tr><td></td><td>1</td><td>L1-</td><td></td><td>=HV1+UV1/1</td></tr>
<tr><td></td><td>1</td><td>L2</td><td></td><td>=HV1+UV1/1</td></tr>
<tr><td></td><td>1</td><td>L2</td><td></td><td>=HV1+UV1/1</td></tr>
<tr><td></td><td>1</td><td>L2-</td><td></td><td>=HV1+UV1/1</td></tr>
<tr><td></td><td>1</td><td>L3</td><td></td><td>=HV1+UV1/1</td></tr>
<tr><td></td><td>1</td><td>L3</td><td></td><td>=HV1+UV1/1</td></tr>
<tr><td></td><td>1</td><td>L3-</td><td></td><td>=HV1+UV1/1</td></tr>
<tr><td></td><td>1</td><td>N</td><td></td><td>=HV1+UV1/1</td></tr>
<tr><td></td><td>1</td><td>N</td><td></td><td>=HV1+UV1/1</td></tr>
<tr><td></td><td>1</td><td>N-</td><td></td><td>=HV1+UV1/1</td></tr>
<tr><td></td><td>1</td><td>PE</td><td></td><td>=HV1+UV1/1</td></tr>
<tr><td></td><td>1</td><td>PE</td><td></td><td>=HV1+UV1/1</td></tr>
</tbody></table></div>
</div>
</div>
<div class="dfoot"><button type="button" class="ok"><u>O</u>K</button><button type="button"><u>C</u>ancel</button></div>
</form>
<svg class="cursor" viewBox="0 0 18 30" aria-hidden="true"><path d="M1.500 1.500v21l5-4.500 4 9 4-2-4-8.500H17z"/></svg>
</body>
</html>
```
FILE: styles.css
```css
* { box-sizing: border-box; }
body {
  margin: 0; padding: 0 0 3px 3px; height: 100vh; overflow: hidden;
  display: flex; flex-direction: column; position: relative;
  background: #162430; color: #e6edf2;
  font: 8px/12px Roboto, "Liberation Sans", sans-serif;
  text-rendering: geometricPrecision;
}
button, input, select { font: inherit; color: inherit; margin: 0; padding: 0; border: 0; background: none; border-radius: 0; text-rendering: inherit; }
a { color: inherit; text-decoration: none; }
ul { list-style: none; margin: 0; padding: 0; }
h2, h3 { margin: 0; font: inherit; }
svg { fill: none; stroke: currentColor; stroke-width: 1; display: block; flex: none; }
.sprite { position: absolute; width: 0; height: 0; }
.f { fill: currentColor; stroke: none; }
.k { fill: #05080c; stroke: none; }
.d { stroke: #3a2c20; }
.gr { stroke: #4fd34f; }
.gd { stroke: #4a7a5c; }
.gf { fill: #4fd34f; stroke: none; }
.ye { stroke: #e3d84a; }
.te { stroke: #2bb3c0; fill: #1d5a68; }
.rf { fill: #a33b4c; stroke: none; }

/* title bar */
.title { height: 24px; flex: none; display: flex; align-items: center; }
.brand { width: 66px; height: 22px; margin-right: 7px; }
.brand path { stroke: #f2dc1c; }
.brandt { font: 200 12px "DejaVu Sans", sans-serif; fill: #f2dc1c; stroke: none; }
.brands { font: 6px Roboto, sans-serif; fill: #7d7d3a; stroke: none; }
.menu { display: flex; gap: 9px; font-weight: 500; }
.search { display: flex; align-items: center; gap: 3px; height: 15px; padding: 0 5px 0 4px; margin-left: 8px; background: #2b3743; font-weight: 500; }
.search svg { width: 9px; height: 9px; }
.ptitle { margin-left: 10px; }
.winbtns { margin-left: auto; display: flex; gap: 18px; margin-right: 12px; }
.winbtns svg { width: 12px; height: 12px; }

/* toolbars */
.bars { flex: none; background: #333f4b; border-top: 1px solid #3d4955; }
.bar { display: flex; align-items: center; height: 23px; border-bottom: 1px solid #2a3541; }
.bar + .bar { border-top: 1px solid #3a4652; }
.bar button { flex: none; width: 21px; height: 20px; display: flex; align-items: center; justify-content: center; color: #dbe2e8; }
.bar svg { width: 16px; height: 16px; }
.bar1 { max-width: 1045px; height: 22px; padding-left: 7px; }
.bar1 button, .bar2 .grp button { flex: 1 1 0; width: auto; min-width: 0; }
.grp { display: flex; align-items: center; border-right: 1px solid #26313d; padding-right: 1px; margin-right: 1px; height: 100%; }
.n1 { flex: 1 0 0; } .n2 { flex: 2 0 0; } .n3 { flex: 3 0 0; } .n4 { flex: 4 0 0; }
.n5 { flex: 5 0 0; } .n6 { flex: 6 0 0; } .n19 { flex: 19 0 0; }
.grip { flex: none; width: 4px; height: 12px; border-left: 2px dotted #4c5864; }
.bar .off { color: #5f6a75; }
.bar .off2 { color: #8c959e; }
.bar .moon { color: #c9a92c; }
.bar .green { color: #5fd35f; }
.bar .dimgreen svg { color: #8fae8f; }
.bar2 { padding-left: 376px; gap: 52px; }
.sub { display: flex; align-items: center; height: 100%; border-left: 1px solid #26313d; padding-left: 3px; }
.suba { width: 365px; }
.subb { border-right: 1px solid #26313d; }
.bar button.dd { width: 28px; justify-content: flex-start; padding-left: 2px; position: relative; }
.dd::after { content: ""; position: absolute; right: 4px; bottom: 5px; width: 2px; height: 2px; background: #dfe5ea; }
.bar3 { padding-left: 3px; border-bottom: 0; }
.bar button.nar { width: 24px; }
.swatch { width: 15px; height: 16px; margin-left: 2px; background: #fff; }
.std { width: 50px; height: 15px; background: #2c3743; color: #78838d; padding-left: 1px; margin: 0 2px; opacity: 1; appearance: none; border: 1px solid #28333e; }
.bar button.big { font-weight: 700; font-size: 11px; padding-left: 6px; }
.teal { width: 4px; height: 4px; border-radius: 2px; background: #35c3b3; align-self: flex-start; margin-top: 2px; }

/* work area */
.work { flex: 1; min-height: 0; display: flex; }
.left { width: 174px; flex: none; display: flex; flex-direction: column; background: #333e4a; }
.right { width: 233px; flex: none; display: flex; flex-direction: column; background: #35414d; }
.split { flex: none; width: 5px; background: #1a2733; }
.thin { width: 6px; }
.phead { flex: none; display: flex; align-items: center; height: 21px; padding: 0 3px 0 7px; background: #3b4753; }
.phead span { margin-right: auto; }
.phead button { margin-left: 5px; }
.phead svg { width: 12px; height: 12px; }
.ptools { flex: none; display: flex; align-items: center; gap: 5px; height: 27px; padding-left: 7px; }
.ptools svg { width: 16px; height: 16px; }
.ptools button:first-child svg { width: 14px; height: 14px; }
.term { flex: none; height: 12px; margin: 2px 6px 6px 5px; padding-left: 2px; background: #1b2833; min-width: 0; }
.term::placeholder { color: #7d8892; opacity: 1; }
.treebox { flex: 1; min-height: 0; display: flex; margin: 0 6px 0 5px; border-top: 1px solid #26313d; }
.tree { flex: 1; min-width: 0; overflow: hidden; padding-left: 2px; }
.tree li { display: flex; align-items: center; height: 13px; white-space: nowrap; }
.tree li:nth-child(3n) { height: 14px; }
.tree svg { width: 12px; height: 12px; margin-right: 3px; }
.tree i, .ex { flex: none; width: 13px; height: 100%; position: relative; }
.tree i::before { content: ""; position: absolute; left: 6px; top: 0; bottom: 0; border-left: 1px solid #46525e; }
.tree i.n::before { display: none; }
.tree i.s::after { content: ""; position: absolute; left: 6px; top: 6px; width: 6px; border-top: 1px solid #46525e; }
.tree i.w { width: 26px; }
.tree i.w::before { left: 5px; }
.ex::before { content: ""; position: absolute; left: 4px; top: 4px; width: 6px; height: 6px; background: linear-gradient(#2b3641, #2b3641) center / 4px 1px no-repeat, linear-gradient(#2b3641, #2b3641) center / 1px 4px no-repeat, #d3dfea; }
.ex.m::before { background: linear-gradient(#2b3641, #2b3641) center / 4px 1px no-repeat, #d3dfea; }
.cur { background: #17222d; padding: 0 1px; margin-left: -1px; }
.sbar { flex: none; width: 12px; background: #eff1f5; display: flex; justify-content: center; }
.sbar::before { content: ""; width: 1px; background: #8f9194; }
.sb1::before { margin: 12px 0 78px; }
.sb2::before { width: 2px; margin: 12px 0 113px; background: #9a9ba0; }
.c1 { color: #f09a1a; } .c2 { color: #23a4d2; } .c3 { color: #2bb99b; } .c4 { color: #b5d125; } .c5 { color: #8a74c8; } .c6 { color: #c0218c; }
.btabs { flex: none; display: flex; height: 18px; background: #1a2733; margin-right: 2px; }
.btabs button { display: flex; align-items: center; gap: 1px; padding: 0 2px; white-space: nowrap; }
.btabs .lit { background: #2f3b47; padding-left: 3px; }
.btabs svg { width: 10px; height: 10px; }

/* document */
.doc { flex: 1; min-width: 0; display: flex; flex-direction: column; background: #35414d; }
.dtabs { flex: none; display: flex; align-items: center; height: 25px; padding-right: 2px; border-top: 2px solid #2a3541; }
.dtab { display: flex; align-items: center; gap: 3px; height: 23px; padding: 0 4px 0 5px; background: #1c2935; }
.dtab svg, .dtabs svg { width: 13px; height: 13px; }
.dtab button { margin-left: 9px; }
.push { margin-left: auto; margin-right: 6px; }
.ruler { flex: none; height: 15px; margin: 0 16px 0 20px; padding: 4px 12px 0 9px; display: grid; grid-template-columns: repeat(8, 1fr); background: #1b2834; text-align: center; }
.ruler span { background: linear-gradient(#9aa5ae, #9aa5ae) left bottom / 1px 6px no-repeat; height: 11px; }
.ruler span:last-child { border-right: 1px solid #9aa5ae; }
.sheet { flex: 1; min-height: 0; background: #fff; margin: 0 3px 5px 3px; overflow: hidden; }
.sheet svg { width: 100%; }
.sheet text { stroke: none; fill: #222; }
.mono { font: 6px "DejaVu Sans Mono", "Liberation Mono", monospace; }
.mid { text-anchor: middle; }
.dots { stroke: #9a9a9a; stroke-dasharray: 1 1; }
.ink { stroke: #4a4a4a; }
.blk { fill: #222; stroke: none; }
.blk2 { stroke: #111; }
.grn { stroke: #3fd03f; }
.thick { stroke: #444; stroke-width: 2; }
.yel { stroke: #ecc92a; stroke-width: 2; }

/* right panels */
.preview { flex: none; height: 197px; margin: 4px 6px 0 4px; border: 1px solid #1d2935; background: #fff; }
.preview svg { width: 100%; height: 100%; }
.handle { flex: none; height: 10px; display: flex; align-items: center; justify-content: center; }
.handle::before { content: ""; width: 26px; height: 2px; background: #505458; }
.rt { gap: 4px; padding: 0 3px 0 7px; height: 28px; }
.vline { width: 1px; height: 17px; background: #58636e; }
.rt label { padding-left: 2px; }
.flt { flex: 1; display: flex; align-items: center; height: 13px; background: #1b2833; padding-left: 3px; }
.flt svg { width: 12px; height: 12px; }
.flt select { appearance: none; flex: 1; padding-left: 6px; min-width: 0; }
.rtb { margin: 0 6px 0 4px; border-top: 0; }
.rtree { padding-left: 7px; }
.rtree svg { margin: 0 5px 0 3px; }
.rtabs { flex: none; display: flex; gap: 3px; height: 20px; padding: 2px 0 0 4px; border-top: 1px solid #2a3541; }
.rtabs button { height: 14px; padding: 0 2px; background: #25313c; }
.rtabs .on { background: none; height: 17px; padding: 0 3px; }
.copilot { flex: none; width: 22px; padding: 4px 5px 0 0; background: #1a2733; }
.copilot button { writing-mode: vertical-rl; transform: rotate(180deg); width: 17px; display: flex; align-items: center; gap: 3px; background: #1f2c38; }
.copilot svg { width: 9px; height: 9px; fill: #efe13a; stroke: none; }

/* status bar */
.status { flex: none; height: 16px; display: flex; align-items: center; background: #3a4651; }
.cell { height: 12px; border-right: 1px solid #2f3a46; }
.s0 { width: 69px; } .grow { flex: 1; } .s1 { width: 67px; } .mm { width: 68px; padding-left: 3px; } .sc { width: 72px; padding-left: 4px; border: 0; }

.banner { position: absolute; right: 0; top: 26px; width: 256px; height: 66px; }
.stripe { stroke: #efdc4a; stroke-width: 2; }
.ws { font: 700 15px "DejaVu Sans", sans-serif; fill: #16242f; stroke: none; }
.logo { stroke: #16242f; stroke-width: 8; }
.bands { stroke: #efdc4a; }

/* dialog */
.dialog { position: absolute; left: 384px; top: 185px; width: 470px; height: 448px; display: flex; flex-direction: column; background: #1d2936; border: 1px solid #18222c; }
.dhead { flex: none; display: flex; align-items: center; justify-content: space-between; height: 21px; padding: 0 4px 0 2px; background: #303c48; }
.dhead h2 { font-weight: 700; }
.dhead svg { width: 12px; height: 12px; }
.dbody { flex: 1; min-height: 0; display: flex; gap: 6px; padding: 6px 4px 0 5px; }
.dnav { flex: none; width: 79px; margin-top: 1px; background: #3a4651; }
.dnav a { display: block; height: 18px; line-height: 18px; padding-left: 4px; }
.dnav .on { background: #1c2833; }
.dmain { flex: 1; min-width: 0; display: flex; flex-direction: column; background: #333e4a; padding: 7px 17px 10px 13px; }
.dmain h3 { height: 19px; padding-left: 0; margin-left: -4px; }
.chk { display: flex; align-items: center; height: 14px; gap: 4px; }
.chk.first { margin-left: -3px; }
.dmain h3 { margin-left: -3px; }
.chk input { appearance: none; width: 9px; height: 9px; border: 1px solid #d5dde4; position: relative; }
.chk input:checked::after { content: ""; position: absolute; left: 2px; top: 0; width: 3px; height: 5px; border: solid #e8eef3; border-width: 0 1px 1px 0; transform: rotate(40deg); }
.fields { display: grid; grid-template-columns: 81px 1fr; grid-auto-rows: 13px; row-gap: 5px; align-items: center; margin: 2px 0 0; padding: 5px 0 3px; border: solid #2b3641; border-width: 1px 0; }
.fields input { background: #1d2936; height: 13px; min-width: 0; }
.combo { position: relative; height: 14px; display: flex; background: #1d2936; }
.combo select { appearance: none; flex: 1; }
.combo::after { content: ""; position: absolute; right: 4px; top: 6px; border: 3px solid transparent; border-top-color: #eef3f7; border-bottom-width: 0; pointer-events: none; }
.checks { display: grid; grid-template-columns: 81px 1fr; row-gap: 1px; padding: 1px 0 3px; }
.checks .full { grid-column: 1 / -1; }
.tablebox { flex: 1; min-height: 0; background: #ebe9f4; overflow: hidden; }
table { width: 100%; table-layout: fixed; border-collapse: collapse; }
.k0 { width: 67px; } .k1 { width: 52px; } .k2 { width: 74px; } .k3 { width: 64px; }
th { height: 20px; padding: 0 3px; background: #333e4a; border: 1px solid #d9dde2; font-weight: 400; font-style: italic; text-align: left; line-height: 9px; }
td { height: 15px; padding: 0 1px 0 2px; background: #b9b7ba; border: 1px solid #f4f3f8; color: #3b3b3f; font-size: 7px; line-height: 10px; white-space: nowrap; }
tbody tr:nth-child(3n) td { height: 14px; }
td:first-child { background: #ebe9f4; }
.ptr { display: block; width: 0; border: 3px solid transparent; border-left-color: #333e4a; border-right-width: 0; margin-left: 2px; }
.dfoot { flex: none; display: flex; justify-content: flex-end; gap: 8px; height: 29px; padding: 6px 6px 6px 0; font-weight: 500; }
.dfoot button { width: 70px; height: 17px; background: #26323e; border: 1px solid #2a3642; line-height: 12px; }
.dfoot .ok { background: #303d49; border-color: #75828d; }
.cursor { position: absolute; left: 614px; top: 401px; width: 18px; height: 30px; fill: #fff; stroke: #1a1a1a; stroke-width: 1.5; }
```
